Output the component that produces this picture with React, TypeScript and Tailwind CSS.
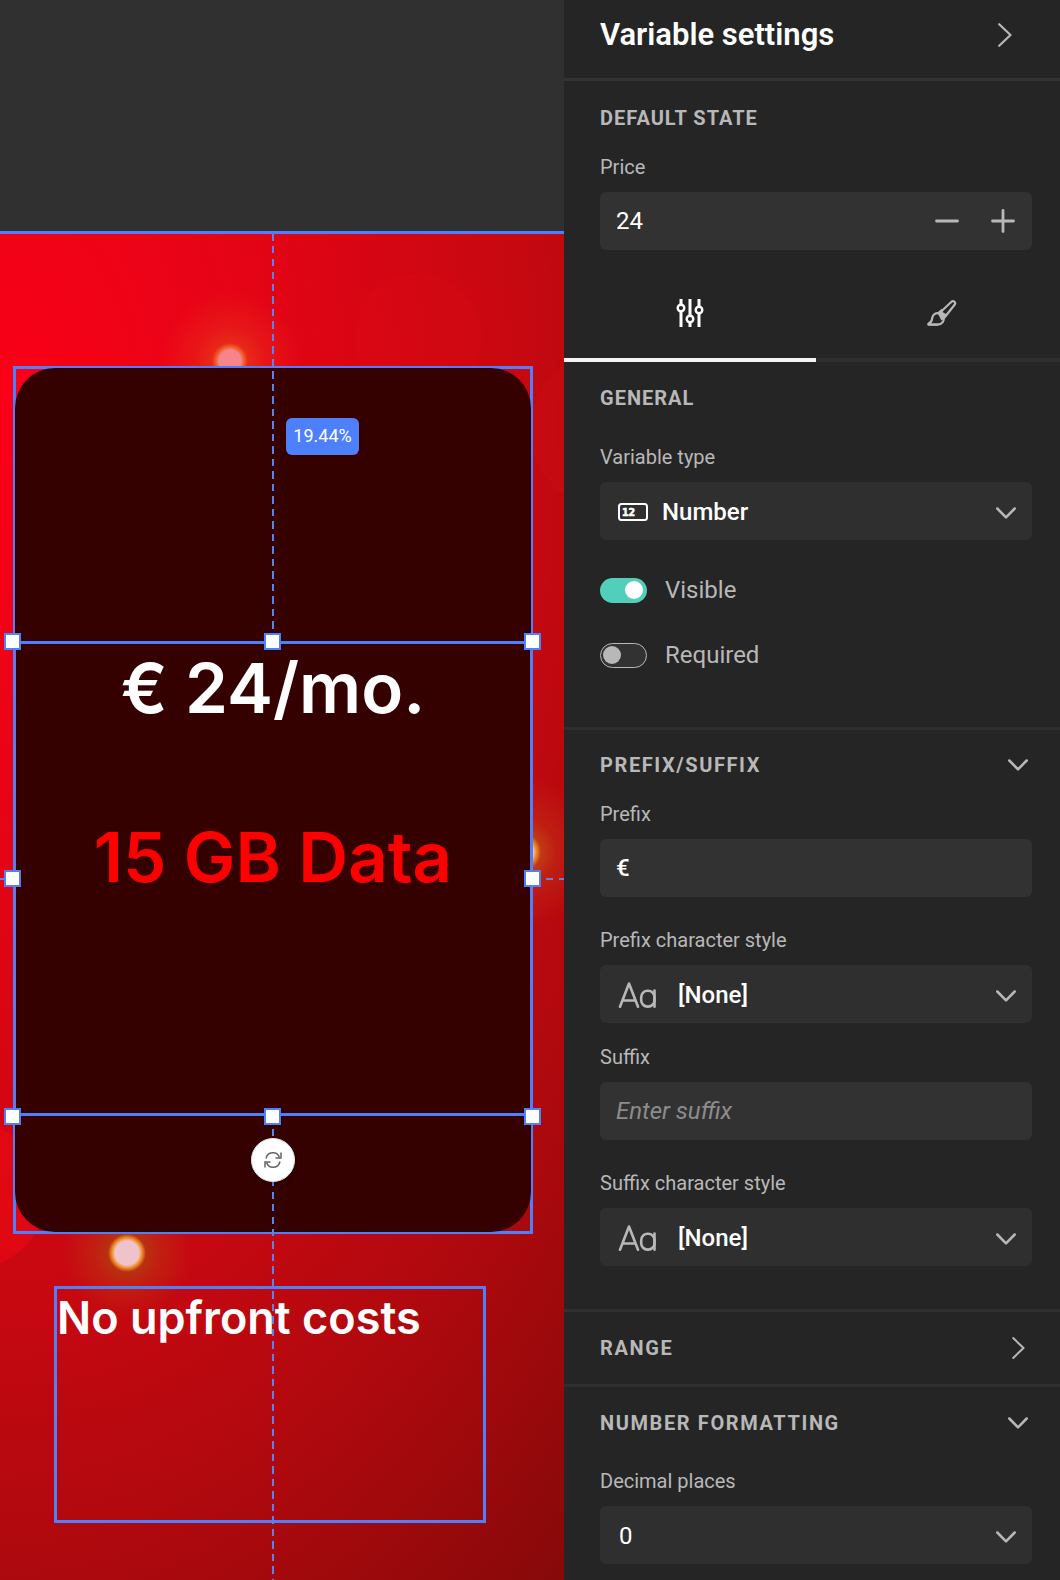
import { useState } from "react";
import type { ReactNode } from "react";

type IconProps = { className?: string };

function ChevronRight({ className }: IconProps) {
  return (
    <svg viewBox="0 0 14 24" className={className} fill="none" stroke="currentColor" strokeWidth="2.200" strokeLinecap="round" strokeLinejoin="round" aria-hidden="true">
      <path d="M1.200 1.200l11.300 10.800L1.200 22.800" />
    </svg>
  );
}

function ChevronDown({ className }: IconProps) {
  return (
    <svg viewBox="0 0 20 12" className={className} fill="none" stroke="currentColor" strokeWidth="2.500" strokeLinecap="round" strokeLinejoin="round" aria-hidden="true">
      <path d="M1.300 1.500l8.700 8.800 8.700-8.800" />
    </svg>
  );
}

function SlidersIcon({ className }: IconProps) {
  return (
    <svg viewBox="0 0 28 28" className={className} fill="none" stroke="currentColor" strokeWidth="3" aria-hidden="true">
      <path d="M5 0v5.500M5 12.500V28M14 0v16.500M14 23.500V28M23 0v7.500M23 14.500V28" />
      <circle cx="5" cy="9" r="3.300" strokeWidth="2.400" />
      <circle cx="14" cy="20" r="3.300" strokeWidth="2.400" />
      <circle cx="23" cy="11" r="3.300" strokeWidth="2.400" />
    </svg>
  );
}

function BrushIcon({ className }: IconProps) {
  return (
    <svg viewBox="0 0 30 28" className={className} fill="none" stroke="currentColor" strokeWidth="2.200" strokeLinecap="round" strokeLinejoin="round" aria-hidden="true">
      <path d="M12 14.500L24.500 2.700a2.200 2.200 0 0 1 3.100 3.100L17.500 18.500z" />
      <path d="M10.300 13.500l4.400-3.800 1.500 3.800 4.300 2.200-3.500 4.300-2.600 1.500z" fill="currentColor" stroke="none" />
      <path d="M12 14.200c-3.500-.6-6.300 1.600-6.800 4.800-.3 2.600-.9 4.600-3.700 5.600v1h9c5-.3 7-4 6-7.400-.6-1.800-1.500-3.200-3.100-4z" />
      <path d="M1.500 25.500h9" />
    </svg>
  );
}

function NumberIcon({ className }: IconProps) {
  return (
    <svg viewBox="0 0 30 18" className={className} aria-hidden="true">
      <rect x="1" y="1" width="28" height="16" rx="2.500" fill="none" stroke="currentColor" strokeWidth="2" />
      <text x="4" y="13" fill="currentColor" stroke="currentColor" strokeWidth="0.600" className="font-['DejaVu_Sans_Mono',monospace] text-[11px] font-bold">12</text>
    </svg>
  );
}

function CharacterStyleIcon({ className }: IconProps) {
  return (
    <svg viewBox="0 0 38 26" className={className} fill="none" stroke="currentColor" strokeWidth="2.600" strokeLinecap="round" strokeLinejoin="round" aria-hidden="true">
      <path d="M2 24.700L11 1.500 20 24.700M5 18.500h12" />
      <path d="M36.500 8.500V24.700" />
      <rect x="23.200" y="8.800" width="13.300" height="15.800" rx="6.400" />
    </svg>
  );
}

function RotateIcon({ className }: IconProps) {
  return (
    <svg viewBox="0 0 18 18" className={className} fill="none" stroke="currentColor" strokeWidth="1.500" aria-hidden="true">
      <path d="M2 7.500A7 7 0 0 1 15.500 6.500M16 10.500A7 7 0 0 1 2.500 11.500" />
      <path d="M17 1.500v5.500h-5.500M1 16.500V11h5.500" />
    </svg>
  );
}

const heading = "text-xl leading-6 font-bold text-[#b8b8b8] uppercase";
const labelText = "text-xl leading-6 text-[#b8b8b8]";
const fieldBox = "h-[58px] w-full rounded-md text-2xl text-white";

function Field({ id, label, children }: { id: string; label: string; children: ReactNode }) {
  return (
    <div className="flex flex-col gap-[13px]">
      <label htmlFor={id} className={labelText}>{label}</label>
      {children}
    </div>
  );
}

function Select({ id, options, icon, pad }: { id: string; options: string[]; icon?: ReactNode; pad: string }) {
  return (
    <div className="relative">
      {icon && <span className="pointer-events-none absolute inset-y-0 left-[18px] flex items-center pt-0.5">{icon}</span>}
      <select id={id} className={`${fieldBox} ${pad} block appearance-none bg-[#2f2f2f] pt-0.5 pr-14`}>
        {options.map((o) => (
          <option key={o}>{o}</option>
        ))}
      </select>
      <span className="pointer-events-none absolute inset-y-0 right-4 flex items-center pt-1 text-[#b8b8b8]">
        <ChevronDown className="h-3 w-5" />
      </span>
    </div>
  );
}

function Toggle({ label, initial }: { label: string; initial: boolean }) {
  const [on, setOn] = useState(initial);
  return (
    <label className="flex h-8 items-center gap-[18px] text-2xl text-[#b8b8b8]">
      <input type="checkbox" role="switch" checked={on} onChange={() => setOn(!on)} className="peer sr-only" />
      <span className={on ? "flex h-[25px] w-[47px] items-center justify-end rounded-full bg-[#52cfba] px-1" : "flex h-[25px] w-[47px] items-center rounded-full border border-[#b8b8b8] bg-[#323232] px-0.5"}>
        <span className={on ? "size-[18px] rounded-full bg-white" : "size-[18px] rounded-full bg-[#b8b8b8]"} />
      </span>
      {label}
    </label>
  );
}

function Handle({ place }: { place: string }) {
  return <span className={`absolute size-[17px] border-2 border-[#4f80fb] bg-white ${place}`} />;
}

function Canvas() {
  return (
    <main className="relative min-w-0 flex-1 overflow-hidden bg-[#303030] pt-[231px]">
      <div className="relative h-full overflow-hidden border-t-[3px] border-[#4f80fb] bg-[radial-gradient(162%_114%_at_0%_14%,#fb0018_0%,#e20415_31%,#c60811_58%,#a8090d_78%,#820909_100%)] font-[Inter,sans-serif]">
        {/* bokeh lights */}
        <span className="absolute top-[39px] left-[354px] size-32 rounded-full bg-[#f01010]/10" />
        <span className="absolute top-[116px] left-[530px] size-40 rounded-full bg-[#e02020]/10" />
        <span className="absolute top-[890px] -left-[98px] size-36 rounded-full bg-[#ff0a14]/40" />
        <span className="absolute top-[27px] left-[130px] size-[200px] rounded-full bg-[radial-gradient(circle,#f5848c_0_11px,#f0602a_14px,#e8281a_18px,rgba(232,40,26,0.500)_35px,transparent_70px)]" />
        <span className="absolute top-[919px] left-[27px] size-[200px] rounded-full bg-[radial-gradient(circle,#f0c2cc_0_12px,#f09028_15px,#b83010_19px,rgba(190,50,16,0.500)_34px,transparent_65px)]" />
        <span className="absolute top-[518px] left-[422px] size-[200px] rounded-full bg-[radial-gradient(circle,#f0c2cc_0_11px,#f09028_14px,#c03a14_19px,rgba(196,50,20,0.500)_34px,transparent_75px)]" />

        {/* price card */}
        <div className="absolute top-[132px] left-[13px] h-[868px] w-[520px] border-[3px] border-[#4f80fb]">
          <div className="-m-px h-[864px] rounded-[40px] bg-[#340000]" />
        </div>
        <div className="absolute top-[407px] left-[13px] h-[475px] w-[520px] border-[3px] border-[#4f80fb] pt-0.5 text-center text-[69px] leading-[84px] font-semibold">
          <p className="text-white">€ 24/mo.</p>
          <p className="mt-[85px] text-[#ff0000]">15 GB Data</p>
        </div>
        <div className="absolute top-[1052px] left-[54px] h-[237px] w-[432px] border-[3px] border-[#4f80fb]">
          <p className="text-[45px] leading-[58px] font-semibold whitespace-nowrap text-white">No upfront costs</p>
        </div>

        {/* alignment guides */}
        <span className="absolute top-0 left-[272px] h-[400px] w-0.5 bg-[repeating-linear-gradient(to_bottom,#6281e4_0_7px,transparent_7px_12.500px)]" />
        <span className="absolute top-[895px] bottom-0 left-[272px] w-0.5 bg-[repeating-linear-gradient(to_bottom,#6281e4_0_7px,transparent_7px_12.500px)]" />
        <span className="absolute top-[644px] left-0 h-0.5 w-1 bg-[#6281e4]" />
        <span className="absolute top-[644px] right-0 left-[546px] h-0.5 bg-[repeating-linear-gradient(to_right,#6281e4_0_7px,transparent_7px_13px)]" />

        <span className="absolute top-[184px] left-[286px] flex h-[37px] w-[73px] items-center justify-center rounded-md bg-[#4f80fb] pb-0.5 font-[Roboto,sans-serif] text-lg text-white">19.44%</span>

        <Handle place="top-[399px] left-1" />
        <Handle place="top-[399px] left-[264px]" />
        <Handle place="top-[399px] left-[524px]" />
        <Handle place="top-[636px] left-1" />
        <Handle place="top-[636px] left-[524px]" />
        <Handle place="top-[874px] left-1" />
        <Handle place="top-[874px] left-[264px]" />
        <Handle place="top-[874px] left-[524px]" />
        <button type="button" aria-label="Rotate" className="absolute top-[904px] left-[251px] flex size-11 items-center justify-center rounded-full border border-[#e4e4e4] bg-white text-[#666666] shadow-md">
          <RotateIcon className="size-[18px]" />
        </button>
      </div>
    </main>
  );
}

export default function App() {
  const [price, setPrice] = useState(24);
  return (
    <div className="flex min-h-screen bg-[#303030] font-[Roboto,sans-serif]">
      <Canvas />
      <aside className="w-[496px] shrink-0 overflow-hidden bg-[#252525]">
        <div className="-mr-2">
          <header className="flex h-[81px] items-center justify-between border-b-[3px] border-[#333333] pr-14 pb-2 pl-9">
            <h1 className="text-[31px] leading-9 font-semibold text-white">Variable settings</h1>
            <button type="button" aria-label="Collapse panel" className="text-[#b8b8b8]">
              <ChevronRight className="h-6 w-3.5" />
            </button>
          </header>

          <section className="px-9 pt-[25px]">
            <h2 className={`${heading} tracking-wider`}>Default state</h2>
            <div className="mt-[25px]">
              <Field id="price" label="Price">
                <div className={`${fieldBox} flex items-center bg-[#323232] pr-[17px] pl-4`}>
                  <input id="price" inputMode="numeric" value={price} onChange={(e) => setPrice(Number(e.target.value) || 0)} className="min-w-0 flex-1 bg-transparent outline-none" />
                  <span className="flex gap-8 text-[#b8b8b8]">
                    <button type="button" aria-label="Decrease" onClick={() => setPrice(price - 1)}>
                      <svg viewBox="0 0 24 24" className="size-6" fill="none" stroke="currentColor" strokeWidth="2.800" strokeLinecap="round"><path d="M1.500 12h21" /></svg>
                    </button>
                    <button type="button" aria-label="Increase" onClick={() => setPrice(price + 1)}>
                      <svg viewBox="0 0 24 24" className="size-6" fill="none" stroke="currentColor" strokeWidth="2.800" strokeLinecap="round"><path d="M1.500 12h21M12 1.500v21" /></svg>
                    </button>
                  </span>
                </div>
              </Field>
            </div>
          </section>

          <div role="tablist" className="mt-4 grid h-24 grid-cols-2">
            <button type="button" role="tab" aria-selected="true" aria-label="Settings" className="flex items-center justify-center border-b-4 border-[#f2f2f2] pt-0.5 text-white">
              <SlidersIcon className="size-7" />
            </button>
            <button type="button" role="tab" aria-selected="false" aria-label="Appearance" className="flex items-center justify-center border-b-4 border-[#2f2f2f] pt-0.5 text-[#b8b8b8]">
              <BrushIcon className="h-7 w-[30px]" />
            </button>
          </div>

          <section className="border-b-[3px] border-[#2f2f2f] px-9 pt-6 pb-14">
            <h2 className={`${heading} tracking-wider`}>General</h2>
            <div className="mt-[35px]">
              <Field id="type" label="Variable type">
                <Select id="type" options={["Number", "Text", "List"]} icon={<NumberIcon className="h-[18px] w-[30px] text-white" />} pad="pl-[62px] font-medium" />
              </Field>
            </div>
            <div className="mt-[34px] flex flex-col items-start gap-[33px]">
              <Toggle label="Visible" initial={true} />
              <Toggle label="Required" initial={false} />
            </div>
          </section>

          <section className="border-b-[3px] border-[#2f2f2f] px-9 pt-[23px] pb-[43px]">
            <button type="button" className="flex w-full items-center justify-between pr-1 text-[#b8b8b8]">
              <span className={`${heading} tracking-[0.08em]`}>Prefix/Suffix</span>
              <ChevronDown className="h-3 w-5" />
            </button>
            <div className="mt-[25px] flex flex-col gap-[31px]">
              <Field id="prefix" label="Prefix">
                <input id="prefix" defaultValue="€" className={`${fieldBox} bg-[#323232] px-4 font-medium`} />
              </Field>
              <Field id="prefix-style" label="Prefix character style">
                <Select id="prefix-style" options={["[None]"]} icon={<CharacterStyleIcon className="h-[26px] w-[38px] text-[#b8b8b8]" />} pad="pl-[78px] font-medium" />
              </Field>
            </div>
            <div className="mt-[22px] flex flex-col gap-[31px]">
              <Field id="suffix" label="Suffix">
                <input id="suffix" placeholder="Enter suffix" className={`${fieldBox} bg-[#323232] px-4 placeholder:text-[#8c8c8c] placeholder:italic`} />
              </Field>
              <Field id="suffix-style" label="Suffix character style">
                <Select id="suffix-style" options={["[None]"]} icon={<CharacterStyleIcon className="h-[26px] w-[38px] text-[#b8b8b8]" />} pad="pl-[78px] font-medium" />
              </Field>
            </div>
          </section>

          <section className="border-b-[3px] border-[#2f2f2f] px-9">
            <button type="button" className="flex h-[72px] w-full items-center justify-between pr-[7px] text-[#b8b8b8]">
              <span className={`${heading} tracking-[0.08em]`}>Range</span>
              <ChevronRight className="h-[22px] w-[13px]" />
            </button>
          </section>

          <section className="px-9 pt-6 pb-4">
            <button type="button" className="flex w-full items-center justify-between pr-1 text-[#b8b8b8]">
              <span className={`${heading} tracking-[0.08em]`}>Number formatting</span>
              <ChevronDown className="h-3 w-5" />
            </button>
            <div className="mt-[34px]">
              <Field id="decimals" label="Decimal places">
                <Select id="decimals" options={["0", "1", "2", "3"]} pad="pl-[19px]" />
              </Field>
            </div>
          </section>
        </div>
      </aside>
    </div>
  );
}
